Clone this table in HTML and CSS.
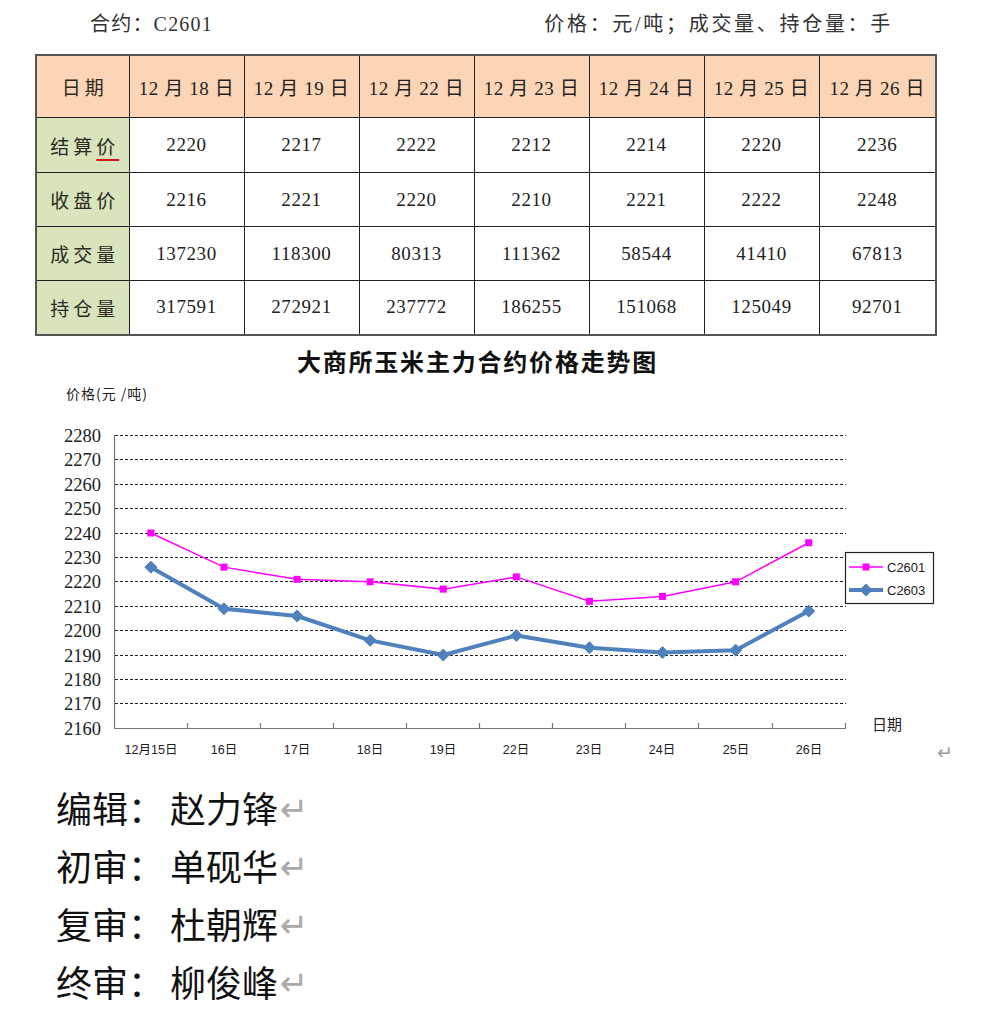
FILE: index.html
```html
<!DOCTYPE html>
<html lang="zh-CN">
<head>
<meta charset="utf-8">
<title>大商所玉米主力合约</title>
<link rel="stylesheet" href="styles.css">
</head>
<body>
<div class="top">
  <span class="contract">合约：C2601</span>
  <span class="units">价格：元/吨；成交量、持仓量：手</span>
</div>

<table class="quote">
  <colgroup>
    <col class="c-label"><col class="c-day"><col class="c-day"><col class="c-day"><col class="c-day"><col class="c-day"><col class="c-day"><col class="c-last">
  </colgroup>
  <thead>
    <tr class="head">
      <th class="lbl lbl-date">日期</th>
      <th>12 月 18 日</th><th>12 月 19 日</th><th>12 月 22 日</th><th>12 月 23 日</th><th>12 月 24 日</th><th>12 月 25 日</th><th>12 月 26 日</th>
    </tr>
  </thead>
  <tbody>
    <tr class="r1">
      <th class="lbl">结算<span class="typo">价</span></th>
      <td>2220</td><td>2217</td><td>2222</td><td>2212</td><td>2214</td><td>2220</td><td>2236</td>
    </tr>
    <tr>
      <th class="lbl">收盘价</th>
      <td>2216</td><td>2221</td><td>2220</td><td>2210</td><td>2221</td><td>2222</td><td>2248</td>
    </tr>
    <tr>
      <th class="lbl">成交量</th>
      <td>137230</td><td>118300</td><td>80313</td><td>111362</td><td>58544</td><td>41410</td><td>67813</td>
    </tr>
    <tr>
      <th class="lbl">持仓量</th>
      <td>317591</td><td>272921</td><td>237772</td><td>186255</td><td>151068</td><td>125049</td><td>92701</td>
    </tr>
  </tbody>
</table>

<h2 class="chart-title">大商所玉米主力合约价格走势图</h2>

<svg class="chart" width="981" height="390" viewBox="0 380 981 390" xmlns="http://www.w3.org/2000/svg">
  <text x="66" y="400" class="ylab">价格(元 /吨)</text>

  <g class="grid">
    <line x1="115" y1="436.5" x2="846" y2="436.5"/>
    <line x1="115" y1="460.5" x2="846" y2="460.5"/>
    <line x1="115" y1="485.5" x2="846" y2="485.5"/>
    <line x1="115" y1="509.5" x2="846" y2="509.5"/>
    <line x1="115" y1="534.5" x2="846" y2="534.5"/>
    <line x1="115" y1="558.5" x2="846" y2="558.5"/>
    <line x1="115" y1="582.5" x2="846" y2="582.5"/>
    <line x1="115" y1="607.5" x2="846" y2="607.5"/>
    <line x1="115" y1="631.5" x2="846" y2="631.5"/>
    <line x1="115" y1="656.5" x2="846" y2="656.5"/>
    <line x1="115" y1="680.5" x2="846" y2="680.5"/>
    <line x1="115" y1="704.5" x2="846" y2="704.5"/>
  </g>

  <g class="axis">
    <line x1="114.5" y1="436" x2="114.5" y2="729.5"/>
    <line x1="114" y1="729.5" x2="846" y2="729.5"/>
    <line x1="187.5" y1="724" x2="187.5" y2="729"/>
    <line x1="260.5" y1="724" x2="260.5" y2="729"/>
    <line x1="333.5" y1="724" x2="333.5" y2="729"/>
    <line x1="406.5" y1="724" x2="406.5" y2="729"/>
    <line x1="479.5" y1="724" x2="479.5" y2="729"/>
    <line x1="552.5" y1="724" x2="552.5" y2="729"/>
    <line x1="625.5" y1="724" x2="625.5" y2="729"/>
    <line x1="698.5" y1="724" x2="698.5" y2="729"/>
    <line x1="772.5" y1="724" x2="772.5" y2="729"/>
    <line x1="845.5" y1="724" x2="845.5" y2="729"/>
  </g>

  <g class="yticks">
    <text x="101" y="443">2280</text>
    <text x="101" y="467">2270</text>
    <text x="101" y="492">2260</text>
    <text x="101" y="516">2250</text>
    <text x="101" y="541">2240</text>
    <text x="101" y="565">2230</text>
    <text x="101" y="589">2220</text>
    <text x="101" y="614">2210</text>
    <text x="101" y="638">2200</text>
    <text x="101" y="663">2190</text>
    <text x="101" y="687">2180</text>
    <text x="101" y="711">2170</text>
    <text x="101" y="736">2160</text>
  </g>

  <g class="xticks">
    <text x="151" y="755">12月15日</text>
    <text x="224" y="755">16日</text>
    <text x="297" y="755">17日</text>
    <text x="370" y="755">18日</text>
    <text x="443" y="755">19日</text>
    <text x="516" y="755">22日</text>
    <text x="589" y="755">23日</text>
    <text x="662" y="755">24日</text>
    <text x="736" y="755">25日</text>
    <text x="809" y="755">26日</text>
  </g>
  <text x="872" y="731" class="xname">日期</text>

  <polyline class="s-blue" points="150.85,568.15 223.95,609.66 297.05,616.98 370.15,641.4 443.25,656.05 516.35,636.52 589.45,648.72 662.55,653.61 735.65,651.17 808.75,612.1"/>
  <g class="m-blue">
    <polygon points="150.85,562.15 156.85,568.15 150.85,574.15 144.85,568.15"/>
    <polygon points="223.95,603.66 229.95,609.66 223.95,615.66 217.95,609.66"/>
    <polygon points="297.05,610.98 303.05,616.98 297.05,622.98 291.05,616.98"/>
    <polygon points="370.15,635.4 376.15,641.4 370.15,647.4 364.15,641.4"/>
    <polygon points="443.25,650.05 449.25,656.05 443.25,662.05 437.25,656.05"/>
    <polygon points="516.35,630.52 522.35,636.52 516.35,642.52 510.35,636.52"/>
    <polygon points="589.45,642.72 595.45,648.72 589.45,654.72 583.45,648.72"/>
    <polygon points="662.55,647.61 668.55,653.61 662.55,659.61 656.55,653.61"/>
    <polygon points="735.65,645.17 741.65,651.17 735.65,657.17 729.65,651.17"/>
    <polygon points="808.75,606.1 814.75,612.1 808.75,618.1 802.75,612.1"/>
  </g>

  <polyline class="s-pink" points="150.85,534 223.95,568.15 297.05,580.36 370.15,582.8 443.25,590.12 516.35,577.91 589.45,602.33 662.55,597.45 735.65,582.8 808.75,543.73"/>
  <g class="m-pink">
    <rect x="147.35" y="530.5" width="7" height="7"/>
    <rect x="220.45" y="564.65" width="7" height="7"/>
    <rect x="293.55" y="576.86" width="7" height="7"/>
    <rect x="366.65" y="579.3" width="7" height="7"/>
    <rect x="439.75" y="586.62" width="7" height="7"/>
    <rect x="512.85" y="574.41" width="7" height="7"/>
    <rect x="585.95" y="598.83" width="7" height="7"/>
    <rect x="659.05" y="593.95" width="7" height="7"/>
    <rect x="732.15" y="579.3" width="7" height="7"/>
    <rect x="805.25" y="540.23" width="7" height="7"/>
  </g>

  <g class="legend">
    <rect class="lg-box" x="845.5" y="553.5" width="88" height="51"/>
    <line class="s-pink" x1="849" y1="568" x2="883" y2="568"/>
    <rect class="lg-sq" x="862.5" y="564.5" width="7" height="7"/>
    <text x="887" y="573">C2601</text>
    <line class="s-blue" x1="849" y1="591" x2="883" y2="591"/>
    <polygon class="lg-dm" points="866,585 872,591 866,597 860,591"/>
    <text x="887" y="596">C2603</text>
  </g>

  <text x="937" y="760" class="ret-mark">↵</text>
</svg>

<div class="credits">
  <p><span class="role">编辑：</span><span class="name">赵力锋</span><span class="ret">↵</span></p>
  <p><span class="role">初审：</span><span class="name">单砚华</span><span class="ret">↵</span></p>
  <p><span class="role">复审：</span><span class="name">杜朝辉</span><span class="ret">↵</span></p>
  <p><span class="role">终审：</span><span class="name">柳俊峰</span><span class="ret">↵</span></p>
</div>
</body>
</html>
```

FILE: styles.css
```css
html, body {
  margin: 0;
  padding: 0;
  background: #ffffff;
}

body {
  width: 981px;
  font-family: "Liberation Serif", "Noto Sans CJK SC", serif;
  color: #222;
}

.top {
  display: flex;
  justify-content: space-between;
  align-items: center;
  height: 44px;
  padding: 0 88px 0 90px;
  font-size: 20px;
  color: #333;
}

.contract {
  letter-spacing: 1.2px;
}

.units {
  letter-spacing: 2.7px;
}

.quote {
  margin: 10px 0 0 35px;
  width: 900px;
  border-collapse: collapse;
  table-layout: fixed;
  border: 2px solid #555;
  font-size: 19px;
}

.c-label { width: 93px; }
.c-day { width: 115px; }
.c-last { width: 117px; }

.quote th,
.quote td {
  border: 1px solid #222;
  padding: 0;
  text-align: center;
  vertical-align: middle;
  font-weight: normal;
  color: #222;
  letter-spacing: 0.6px;
}

.quote .head th {
  background: #fbd5b5;
  height: 61px;
}

.quote tbody tr {
  height: 54px;
}

.quote tbody tr.r1 {
  height: 55px;
}

.quote .lbl {
  background: #d8e4bc;
  letter-spacing: 4px;
  padding-left: 4px;
  color: #2b2b20;
}

.quote .head .lbl-date {
  background: #fbd5b5;
  letter-spacing: 4px;
}

.typo {
  text-decoration: underline;
  text-decoration-color: #d9141a;
  text-decoration-thickness: 2px;
  text-underline-offset: 5px;
}

.chart-title {
  margin: 7px 0 0 0;
  height: 36px;
  line-height: 36px;
  padding-right: 26px;
  text-align: center;
  font-family: "Noto Sans CJK SC", sans-serif;
  font-size: 24px;
  font-weight: 700;
  letter-spacing: 1.8px;
  color: #111;
}

.chart {
  display: block;
}

.chart text {
  fill: #222;
}

.ylab {
  font-family: "Noto Sans CJK SC", sans-serif;
  font-size: 14px;
  letter-spacing: 1px;
}

.grid line {
  stroke: #222;
  stroke-width: 1;
  stroke-dasharray: 3 2;
}

.axis line {
  stroke: #777;
  stroke-width: 1.2;
}

.yticks text {
  font-family: "Liberation Serif", serif;
  font-size: 18.5px;
  text-anchor: end;
}

.xticks text {
  font-family: "Liberation Sans", "Noto Sans CJK SC", sans-serif;
  font-size: 12.5px;
  text-anchor: middle;
}

.xname {
  font-family: "Noto Sans CJK SC", sans-serif;
  font-size: 15px;
}

.s-blue {
  fill: none;
  stroke: #4f81bd;
  stroke-width: 4;
  stroke-linejoin: round;
}

.m-blue polygon,
.lg-dm {
  fill: #4f81bd;
  stroke: #4f81bd;
  stroke-width: 1;
}

.s-pink {
  fill: none;
  stroke: #ff00ff;
  stroke-width: 1.5;
}

.m-pink rect,
.lg-sq {
  fill: #ff00ff;
}

.lg-box {
  fill: #ffffff;
  stroke: #222;
  stroke-width: 1.2;
}

.legend text {
  font-family: "Liberation Sans", sans-serif;
  font-size: 13px;
}

.chart .ret-mark {
  font-family: "DejaVu Sans", sans-serif;
  font-size: 19px;
  fill: #999;
}

.credits {
  margin-top: 9px;
  padding-left: 56px;
  font-family: "Noto Sans CJK SC", sans-serif;
  font-size: 36px;
  color: #111;
}

.credits p {
  margin: 0;
  height: 58px;
  line-height: 58px;
}

.role {
  margin-right: 6px;
}

.ret {
  display: inline-block;
  font-family: "DejaVu Sans", sans-serif;
  font-size: 34px;
  line-height: 1;
  color: #aaa;
  margin-left: 2px;
  vertical-align: 2px;
}
```
